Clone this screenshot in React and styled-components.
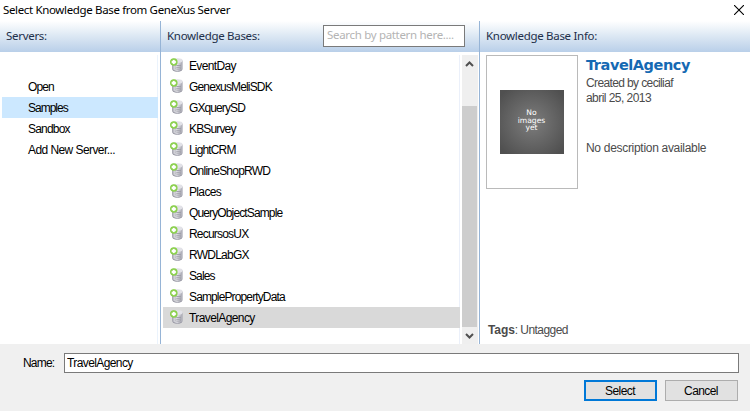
import React from "react";
import styled, { createGlobalStyle } from "styled-components";

const Global = createGlobalStyle`
  *, *::before, *::after { box-sizing: border-box; }
  body { margin: 0; overflow: hidden; }
  button, input { font: inherit; }
`;

const sans = `"Liberation Sans", Arial, sans-serif`;
const humanist = `"Noto Sans", "Open Sans", sans-serif`;

const Dialog = styled.div`
  width: 750px;
  height: 411px;
  display: flex;
  flex-direction: column;
  background: #fff;
  color: #000;
  font: 12px/21px ${sans};
  white-space: nowrap;
`;

const TitleBar = styled.header`
  flex: 0 0 21px;
  display: flex;
  justify-content: space-between;
  padding: 0 6px 0 3px;
  font: 11.5px/20px ${humanist};
  letter-spacing: -0.35px;
`;

const CloseIcon = styled.svg`
  width: 10px;
  height: 10px;
  margin-top: 5px;
`;

const Columns = styled.main`
  flex: 0 0 323px;
  display: grid;
  grid-template-columns: 160px 319px 271px;
`;

const Column = styled.section`
  display: flex;
  flex-direction: column;
  min-width: 0;
  border-left: ${(p) => (p.$divided ? "1px solid #96b4d6" : "none")};
`;

const ColumnHeader = styled.div`
  flex: 0 0 31px;
  display: flex;
  justify-content: space-between;
  padding: 4px 14px 0 6px;
  background: linear-gradient(#fff, #dbe7f3 50%, #b9cfe9);
  color: #1e2f4a;
  font: 11.5px/22px ${humanist};
`;

const ColumnTitle = styled.span`
  letter-spacing: -0.3px;
`;

const SearchInput = styled.input`
  width: 142px;
  height: 22px;
  padding: 0 3px 2px;
  border: 1px solid #7a7a7a;
  background: #fff;
  letter-spacing: -0.32px;
  outline: none;
  &::placeholder { color: #b4b4b4; opacity: 1; }
`;

const ServerList = styled.ul`
  width: 156px;
  height: 289px;
  margin: 3px 0 0 2px;
  padding: 21px 0 0;
  border-right: 1px solid #ebf3fc;
  list-style: none;
`;

const ServerItem = styled.li`
  height: 21px;
  padding: 1px 0 0 26px;
  margin-right: -1px;
  background: ${(p) => (p.$selected ? "#cce8ff" : "transparent")};
`;

const BaseArea = styled.div`
  display: flex;
  justify-content: space-between;
  height: 289px;
  margin-top: 3px;
  padding: 0 1px 0 2px;
`;

const BaseList = styled.ul`
  width: 297px;
  margin: 0;
  padding: 0;
  border-right: 1px solid #ebf0fa;
  list-style: none;
`;

const BaseItem = styled.li`
  display: flex;
  height: 21px;
  padding: 1px 0 0 6px;
  margin-right: -1px;
  background: ${(p) => (p.$selected ? "#d9d9d9" : "transparent")};
`;

const BaseIcon = styled.svg`
  width: 16px;
  height: 16px;
  margin: 1px 4px 0 0;
`;

const Label = styled.span`
  letter-spacing: ${(p) => p.$track || 0}px;
`;

const ScrollBar = styled.div`
  width: 16px;
  display: flex;
  flex-direction: column;
  background: #efefef;
`;

const ArrowIcon = styled.svg`
  width: 16px;
  height: 17px;
`;

const Thumb = styled.div`
  width: 15px;
  height: 221px;
  margin-top: 34px;
  background: #cdcdcd;
`;

const Info = styled.div`
  flex: 1;
  display: flex;
  flex-direction: column;
  justify-content: space-between;
  padding: 3px 6px 6px;
  color: #4b4b4b;
`;

const Summary = styled.div`
  display: flex;
  gap: 8px;
`;

const Frame = styled.div`
  width: 92px;
  height: 134px;
  display: flex;
  align-items: center;
  justify-content: center;
  border: 1px solid #bababa;
`;

const NoImage = styled.div`
  display: flex;
  flex-direction: column;
  align-items: center;
  width: 64px;
  height: 64px;
  padding: 19px 1px 0 0;
  background: radial-gradient(circle, #7d7d7d, #505050 90%);
  color: #fff;
  font: 7.6px/7.5px "DejaVu Sans", sans-serif;
`;

const Facts = styled.div`
  line-height: 15px;
`;

const BaseName = styled.h2`
  margin: 2px 0 2px;
  color: #1569b3;
  font: bold 14.5px/17px "DejaVu Sans", sans-serif;
  letter-spacing: -0.45px;
`;

const Fact = styled.div`
  letter-spacing: ${(p) => p.$track || 0}px;
`;

const Description = styled(Fact)`
  margin-top: 35px;
`;

const Tags = styled.div`
  padding-left: 2px;
  line-height: 16px;
  letter-spacing: -0.55px;
  b { letter-spacing: -0.1px; }
`;

const Footer = styled.footer`
  flex: 1;
  padding: 9px 11px 0 23px;
  background: #f0f0f0;
`;

const NameRow = styled.label`
  display: flex;
  height: 20px;
  line-height: 20px;
  justify-content: space-between;
`;

const NameInput = styled.input`
  width: 675px;
  height: 20px;
  padding: 0 2px;
  border: 1px solid #7a7a7a;
  background: #fff;
  letter-spacing: -0.6px;
  outline: none;
`;

const Actions = styled.div`
  display: flex;
  justify-content: flex-end;
  gap: 8px;
  margin: 7px 1px 0 0;
`;

const Button = styled.button`
  width: 73px;
  height: 21px;
  padding: 1px 1px 0 0;
  border: ${(p) => (p.$primary ? "2px solid #0078d7" : "1px solid #adadad")};
  background: #e1e1e1;
  color: #000;
  line-height: 16px;
  letter-spacing: ${(p) => p.$track || 0}px;
`;

const servers = [
  ["Open", -0.9],
  ["Samples", -1],
  ["Sandbox", -0.8],
  ["Add New Server...", -0.57],
];

const bases = [
  ["EventDay", -0.65],
  ["GenexusMeliSDK", -0.85],
  ["GXquerySD", -0.9],
  ["KBSurvey", -0.85],
  ["LightCRM", -0.85],
  ["OnlineShopRWD", -0.76],
  ["Places", -0.65],
  ["QueryObjectSample", -0.87],
  ["RecursosUX", -0.8],
  ["RWDLabGX", -0.75],
  ["Sales", -0.9],
  ["SamplePropertyData", -0.87],
  ["TravelAgency", -0.6],
];

function DatabaseIcon() {
  return (
    <BaseIcon viewBox="0 0 16 16">
      <defs>
        <linearGradient id="metal">
          <stop offset="0" stopColor="#a0a0aa" />
          <stop offset=".4" stopColor="#f0f0f4" />
          <stop offset="1" stopColor="#a4a4af" />
        </linearGradient>
      </defs>
      <path d="M3 4v7.8c0 3.6 10.6 3.6 10.6 0V3.5z" fill="url(#metal)" />
      <path d="M4 13.1c2 1.6 7 1.6 8.8 0" stroke="#9696a2" fill="none" />
      <ellipse cx="8.6" cy="3.5" rx="5" ry="2.3" fill="#e2e2e8" />
      <path d="M6.2 8.2c1.8.5 4 .4 5.8 0M6.2 10c1.8.5 4 .4 5.8 0M6.2 11.8c1.8.5 4 .4 5.8 0" stroke="#85858f" strokeWidth=".7" fill="none" />
      <circle cx="4.8" cy="5" r="3.2" fill="#a9dd78" stroke="#88cf4a" strokeWidth="1.2" />
      <path d="M4.8 3v4M2.8 5h4" stroke="#fff" strokeWidth="1.8" />
    </BaseIcon>
  );
}

export default function App() {
  return (
    <>
      <Global />
      <Dialog>
        <TitleBar>
          <span>Select Knowledge Base from GeneXus Server</span>
          <CloseIcon viewBox="0 0 10 10">
            <path d="M0 0l10 10M10 0L0 10" stroke="#000" strokeWidth="1.1" />
          </CloseIcon>
        </TitleBar>
        <Columns>
          <Column>
            <ColumnHeader><ColumnTitle>Servers:</ColumnTitle></ColumnHeader>
            <ServerList>
              {servers.map(([name, track]) => (
                <ServerItem key={name} $selected={name === "Samples"}>
                  <Label $track={track}>{name}</Label>
                </ServerItem>
              ))}
            </ServerList>
          </Column>
          <Column $divided>
            <ColumnHeader>
              <ColumnTitle>Knowledge Bases:</ColumnTitle>
              <SearchInput placeholder="Search by pattern here...." />
            </ColumnHeader>
            <BaseArea>
              <BaseList>
                {bases.map(([name, track]) => (
                  <BaseItem key={name} $selected={name === "TravelAgency"}>
                    <DatabaseIcon />
                    <Label $track={track}>{name}</Label>
                  </BaseItem>
                ))}
              </BaseList>
              <ScrollBar>
                <ArrowIcon viewBox="0 0 16 17">
                  <path d="M4 11l3.5-3.5L11 11" fill="none" stroke="#505050" strokeWidth="2" />
                </ArrowIcon>
                <Thumb />
                <ArrowIcon viewBox="0 0 16 17">
                  <path d="M4 7L7.5 10.5 11 7" fill="none" stroke="#505050" strokeWidth="2" />
                </ArrowIcon>
              </ScrollBar>
            </BaseArea>
          </Column>
          <Column $divided>
            <ColumnHeader><ColumnTitle>Knowledge Base Info:</ColumnTitle></ColumnHeader>
            <Info>
              <Summary>
                <Frame>
                  <NoImage>
                    <span>No</span>
                    <span>images</span>
                    <span>yet</span>
                  </NoImage>
                </Frame>
                <Facts>
                  <BaseName>TravelAgency</BaseName>
                  <Fact $track={-0.62}>Created by ceciliaf</Fact>
                  <Fact $track={-0.55}>abril 25, 2013</Fact>
                  <Description $track={-0.3}>No description available</Description>
                </Facts>
              </Summary>
              <Tags><b>Tags</b>: Untagged</Tags>
            </Info>
          </Column>
        </Columns>
        <Footer>
          <NameRow>
            <Label $track={-0.8}>Name:</Label>
            <NameInput defaultValue="TravelAgency" />
          </NameRow>
          <Actions>
            <Button $primary $track={-0.55}>Select</Button>
            <Button $track={-0.6}>Cancel</Button>
          </Actions>
        </Footer>
      </Dialog>
    </>
  );
}
